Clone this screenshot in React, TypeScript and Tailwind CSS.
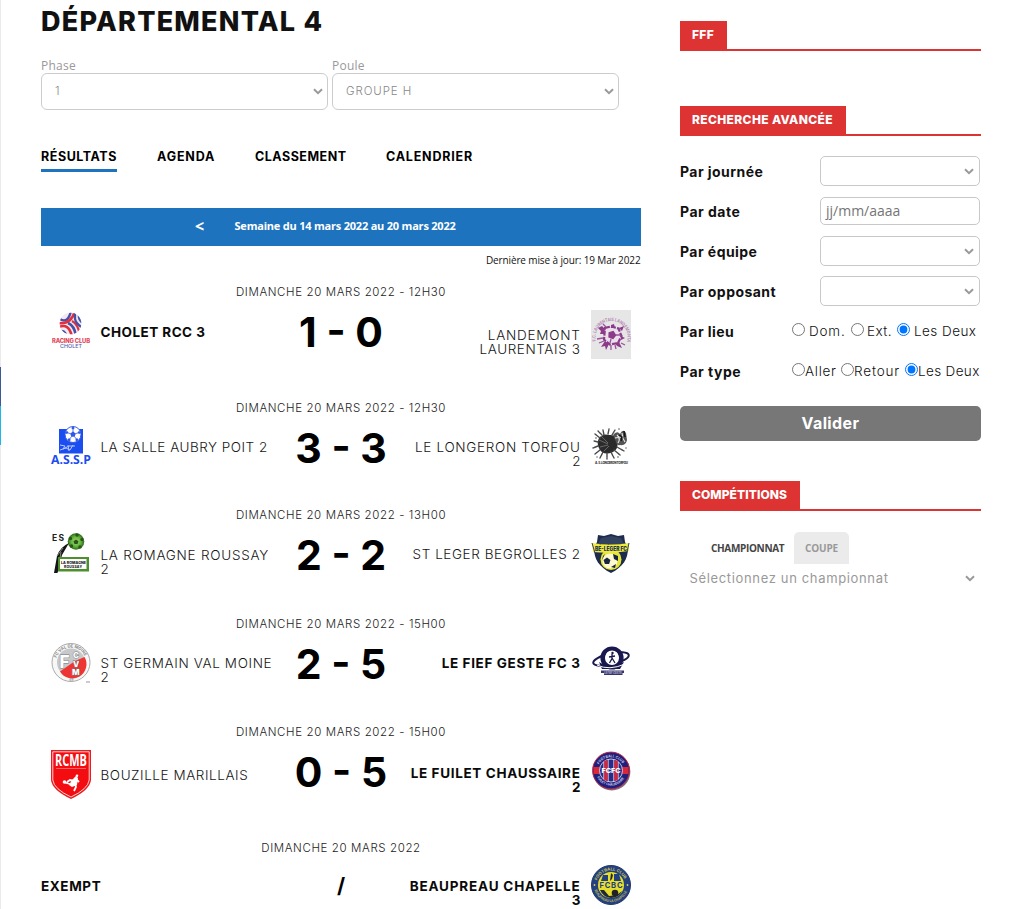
import type { ReactNode } from "react";

const sans = "font-['Inter',sans-serif]";
const open = "font-['Open_Sans',sans-serif]";

function Chevron() {
  return (
    <svg width="10" height="7" viewBox="0 0 10 7" className="shrink-0">
      <path d="M1 1.2 5 5.1 9 1.2" fill="none" stroke="#999" strokeWidth="2" />
    </svg>
  );
}

function ArcText({ id, d, size, fill, length, children }: { id: string; d: string; size: number; fill: string; length: number; children: string }) {
  return (
    <>
      <path id={id} d={d} fill="none" />
      <text fontSize={size} fill={fill} fontWeight="700" fontFamily="Inter, sans-serif">
        <textPath href={`#${id}`} textLength={length} lengthAdjust="spacingAndGlyphs">{children}</textPath>
      </text>
    </>
  );
}

const pentagon = (cx: number, cy: number, r: number, turn = 0) =>
  [0, 1, 2, 3, 4]
    .map((i) => {
      const a = ((i * 72 - 90 + turn) * Math.PI) / 180;
      return `${cx + r * Math.cos(a)},${cy + r * Math.sin(a)}`;
    })
    .join(" ");

function Ball({ cx, cy, r, base, ink }: { cx: number; cy: number; r: number; base: string; ink: string }) {
  return (
    <g>
      <circle cx={cx} cy={cy} r={r} fill={base} stroke={ink} strokeWidth={r * 0.12} />
      <polygon points={pentagon(cx, cy, r * 0.36)} fill={ink} />
      {[0, 1, 2, 3, 4].map((i) => {
        const a = ((i * 72 - 90) * Math.PI) / 180;
        const x = Math.cos(a);
        const y = Math.sin(a);
        return (
          <g key={i}>
            <path d={`M${cx + x * r * 0.3} ${cy + y * r * 0.3}L${cx + x * r * 0.75} ${cy + y * r * 0.75}`} stroke={ink} strokeWidth={r * 0.1} />
            <polygon points={pentagon(cx + x * r * 0.82, cy + y * r * 0.82, r * 0.2, 180 + i * 72)} fill={ink} />
          </g>
        );
      })}
    </g>
  );
}

function Cholet() {
  return (
    <svg width="40" height="40" viewBox="0 0 40 40" className="overflow-visible">
      <clipPath id="cholet"><circle cx="19.5" cy="13.5" r="10.8" /></clipPath>
      <g clipPath="url(#cholet)" fill="none">
        <rect x="8" y="2" width="24" height="24" fill="#f3e9f1" />
        <path d="M9 9Q17 14 20 1" stroke="#4550a8" strokeWidth="2.4" />
        <path d="M7 13Q20 15 24 1" stroke="#e0303f" strokeWidth="2.6" />
        <path d="M7 17.5Q18 12 21 27" stroke="#e0303f" strokeWidth="2.6" />
        <path d="M7 22Q14 18 16 28" stroke="#4550a8" strokeWidth="2.4" />
        <path d="M17 13Q24 16 25 27" stroke="#4550a8" strokeWidth="2.6" />
        <path d="M21 11Q27 14 29 25" stroke="#e0303f" strokeWidth="2.4" />
        <path d="M24 3V9Q25 14 32 18M28 4Q27 10 32 13" stroke="#4550a8" strokeWidth="2.3" />
      </g>
      <text x="1" y="32.5" fontSize="5.8" fontWeight="800" fill="#e2475a" textLength="38" fontFamily="Inter, sans-serif">RACING CLUB</text>
      <text x="9" y="38.4" fontSize="5.4" fontWeight="500" fill="#5560ac" textLength="22" fontFamily="Inter, sans-serif">CHOLET</text>
    </svg>
  );
}

function Landemont() {
  return (
    <svg width="40" height="49" viewBox="0 0 40 49" className="overflow-visible">
      <rect width="40" height="49" fill="#e6e6e6" />
      <ArcText id="landemont" d="M5 31A16 16 0 1 1 36 31" size={4.6} fill="#b589b3" length={62}>F.C. LAURENTAIS LANDEMONTAIS</ArcText>
      <path d="M14 18 20 16.5 27.5 18.5 30.5 26 27 33 19 34.5 13 29.5Z" fill="#eadfea" stroke="#8c3a8a" strokeWidth="2.2" strokeDasharray="5 1.2" />
      <polygon points={pentagon(21, 25, 4.4, 20)} fill="#8c3a8a" />
      <path d="M7 18 11 16 14 19 13 24 9 24 10 21Z" fill="#8c3a8a" />
      <path d="M20 15 23 14 24 18 20 18ZM28 18 33 16 31 21ZM30 26 34 28 30 30ZM24 33 28 32 31 38 26 36ZM14 31 18 34 15 40 14 36 10 37Z" fill="#8c3a8a" />
      <path d="M6 29 12 28M8 33 13 31M20 35V40M24 35 25 39M12 14 15 17M30 33 34 35M20 29 19 33M25 25H29" stroke="#9c529a" strokeWidth="1.3" />
    </svg>
  );
}

function Assp() {
  return (
    <svg width="40" height="40" viewBox="0 0 40 40" className="overflow-visible">
      <rect x="8" y="3" width="24" height="24.5" fill="#1c4df0" />
      <Ball cx={22} cy={8.5} r={8} base="#fff" ink="#3158e8" />
      <path d="M9 19 14 20 12 23 18 20 24 20M9 24 15 22 19 24 22 19M17 19 18 25" stroke="#b9c8ff" strokeWidth="1" fill="none" />
      <text x="0" y="37.5" fontSize="12.5" fontWeight="700" fill="#1c4df0" textLength="40" lengthAdjust="spacingAndGlyphs" fontFamily="Open Sans, sans-serif">A.S.S.P</text>
    </svg>
  );
}

function Torfou() {
  return (
    <svg width="40" height="40" viewBox="0 0 40 40" className="overflow-visible">
      <path d="M8 12Q12 7 18 9Q25 8 26 15Q28 23 22 26Q13 30 9 24Q5 18 8 12Z" fill="#2b2b2b" />
      <path d="M9 12 4 8M11 9 7 5M13 9 12 4M17 8 18 3M21 9 24 4M7 16 3 15M7 20 2 22M9 24 4 28M12 26 9 32M16 27 16 33M20 26 23 32M23 24 29 29M26 21 33 25" stroke="#4a4a4a" strokeWidth="1.4" strokeLinecap="round" strokeDasharray="4 .8 2 1" />
      <path d="M10 10 17 17M8 14 17 18M9 21 17 19M13 25 18 20" stroke="#777" strokeWidth=".8" />
      <path d="M22 9Q26 4 29 8Q32 2 35 7L36 14Q35 20 29 19Q26 20 25 16Z" fill="#555" />
      <path d="M26 9Q30 13 27 17M31 7Q31 12 34 16M24 12 30 11" stroke="#eee" strokeWidth="1.1" fill="none" />
      <path d="M28 9 31 11 30 15M33 5 34 11" stroke="#151515" strokeWidth="1.5" fill="none" />
      <g fill="#555"><circle cx="5" cy="12" r=".8" /><circle cx="28" cy="3" r=".8" /><circle cx="27" cy="31" r=".8" /><circle cx="6" cy="31" r=".7" /><circle cx="35" cy="22" r=".7" /></g>
      <text x="4" y="38" fontSize="3" fontWeight="800" fill="#333" textLength="33" fontFamily="Inter, sans-serif">A. S. LONGERON TORFOU</text>
    </svg>
  );
}

function Romagne() {
  return (
    <svg width="40" height="42" viewBox="0 0 40 42" className="overflow-visible">
      <defs>
        <radialGradient id="green"><stop offset="0" stopColor="#a8df78" /><stop offset=".6" stopColor="#62b13a" /><stop offset="1" stopColor="#2f6b1d" /></radialGradient>
      </defs>
      <text x="1" y="8" fontSize="8.5" fontWeight="700" fill="#222" textLength="12" fontFamily="Inter, sans-serif">ES</text>
      <circle cx="25" cy="8.5" r="8.3" fill="url(#green)" />
      <g fill="#27551b">
        <polygon points={pentagon(25, 9, 2.6)} />
        <circle cx="19.5" cy="5.5" r="1.7" /><circle cx="26" cy="2" r="1.7" /><circle cx="31" cy="6.5" r="1.7" /><circle cx="29" cy="14" r="1.7" /><circle cx="20.5" cy="13" r="1.7" />
      </g>
      <path d="M18 10Q9 14 6 23L3 40H6.5L9 30 11 22Z" fill="#141414" />
      <path d="M6 23 12 15M10 19 8 31" stroke="#888" strokeWidth="1" fill="none" />
      <rect x="7" y="24" width="31" height="14.5" fill="#4c8f2c" />
      <rect x="9" y="26" width="26.5" height="10" fill="#fff" />
      <text x="10" y="30.8" fontSize="3.6" fontWeight="800" fill="#111" textLength="25" fontFamily="Inter, sans-serif">LA ROMAGNE</text>
      <text x="13" y="35" fontSize="3.4" fontWeight="800" fill="#111" textLength="18" fontFamily="Inter, sans-serif">ROUSSAY</text>
    </svg>
  );
}

function Leger() {
  return (
    <svg width="40" height="42" viewBox="0 0 40 42" className="overflow-visible">
      <path d="M7 2 13 3 20 1 27 3 33 2 34 9 37 15C37 26 32 34 20 40C8 34 3 26 3 15L6 9Z" fill="#1d2c4c" />
      <path d="M10 5 20 3 30 5 33 11H7Z" fill="#33425f" />
      <circle cx="20" cy="26.5" r="10.5" fill="#e6e63a" />
      <circle cx="19" cy="28" r="7.5" fill="#fff9cf" />
      <polygon points={pentagon(16, 28, 3.6)} fill="#182540" />
      <path d="M22 21 27 23 27 28 23 26ZM20 34 25 31 24 35ZM12 23 14 21 11 27Z" fill="#182540" />
      <path d="M1 10Q20 13 38 10V18Q20 21 2 19Z" fill="#f0eb39" />
      <path d="M1 10 4 20M38 10 36 19" stroke="#304060" />
      <text x="4" y="17.6" fontSize="5.6" fontWeight="900" fill="#26365a" textLength="32" lengthAdjust="spacingAndGlyphs" fontFamily="Inter, sans-serif">BÉ-LÉGER FC</text>
    </svg>
  );
}

function Germain() {
  return (
    <svg width="40" height="41" viewBox="0 0 40 41" className="overflow-visible">
      <circle cx="20" cy="20.5" r="19" fill="#f7f7f7" stroke="#aaa" />
      <circle cx="20" cy="20.5" r="14" fill="#c6c8ca" />
      <path d="M33.5 15A14 14 0 0 1 9 29.5L24 19Z" fill="#ed3634" />
      <ArcText id="germain" d="M5.5 16A15.3 15.3 0 0 1 34.5 16" size={4.2} fill="#888" length={36}>FC VAL DE MOINE</ArcText>
      <g fontFamily="Inter, sans-serif" fontWeight="800" fill="#fff" stroke="#777" strokeWidth=".8" paintOrder="stroke">
        <text x="8.5" y="26" fontSize="17">F</text>
        <text x="22" y="15.5" fontSize="8">C</text>
        <text x="22" y="24.5" fontSize="8">V</text>
        <text x="21" y="33.3" fontSize="8">M</text>
      </g>
      <text x="18" y="38.8" fontSize="3.6" fill="#777" fontFamily="Inter, sans-serif">49</text>
      <path d="M35 40H39" stroke="#999" />
    </svg>
  );
}

function Fief() {
  return (
    <svg width="40" height="40" viewBox="0 0 40 40" className="overflow-visible">
      <ellipse cx="20" cy="17" rx="18.2" ry="5.6" transform="rotate(-13 20 17)" fill="none" stroke="#19194f" strokeWidth="2" />
      <circle cx="21" cy="16" r="9.3" fill="#fff" stroke="#19194f" strokeWidth="4.6" />
      <path d="M8 20Q18 27 33 20L29 27H11Z" fill="#19194f" />
      <circle cx="21" cy="15" r="6.6" fill="#fff" />
      <circle cx="21.5" cy="11" r="1.2" fill="#19194f" />
      <path d="M21 12V16.5L18.5 21M21 16 24 21M18 15 24 14" stroke="#19194f" strokeWidth="1.3" fill="none" />
      <path d="M6 23Q18 29 34 22" stroke="#fff" strokeWidth="1" fill="none" />
      <path d="M10 28.5H33V31H31.5V33H13V31H10Z" fill="#35356b" />
      <text x="13" y="32" fontSize="3.2" fontWeight="700" fill="#a5a5c8" textLength="18" fontFamily="Inter, sans-serif">LE FIEF GESTE</text>
    </svg>
  );
}

function Rcmb() {
  return (
    <svg width="40" height="49" viewBox="0 0 40 49" className="overflow-visible">
      <path d="M0 0H40V30Q39 40 20 49Q1 40 0 30Z" fill="#e81d1f" />
      <path d="M1.8 1.8H38.2V30Q37 39 20 47Q3 39 1.8 30Z" fill="#f40d10" stroke="#fff" strokeWidth=".8" />
      <text x="4" y="16" fontSize="15.5" fontWeight="700" fill="#fff" textLength="32" lengthAdjust="spacingAndGlyphs" fontFamily="Open Sans, sans-serif">RCMB</text>
      <path d="M5 18.5H35" stroke="#ff6c6c" strokeWidth=".9" />
      <path d="M25 27 23.5 32 25 37 23 41M23.5 31 19 30 16 32M22 35 14 32.5M25 29 28 32" stroke="#fff" strokeWidth="1.8" fill="none" />
      <path d="M21 30 25 26 27 28 26 35 21 37 18 35Z" fill="#fff" />
      <circle cx="26" cy="25.8" r="1.3" fill="#fff" />
      <circle cx="13.5" cy="32" r="1.8" fill="#fff" />
    </svg>
  );
}

function Fuilet() {
  return (
    <svg width="40" height="41" viewBox="0 0 40 41" className="overflow-visible">
      <circle cx="20.8" cy="21.8" r="18.6" fill="#77777f" />
      <circle cx="20" cy="20.5" r="18.4" fill="#20207c" stroke="#bd2444" />
      <path d="M2.5 17H37.5V24H2.5Z" fill="#d9283a" />
      <circle cx="20" cy="20.5" r="11.5" fill="#2a2a8c" stroke="#e8e8f4" strokeWidth=".8" />
      <path d="M15 10.5V30.5M25 10.5V30.5" stroke="#d92436" strokeWidth="3.4" />
      <path d="M12.7 12V29M17.3 9.5V31.5M22.7 9.5V31.5M27.3 12V29" stroke="#eee" strokeWidth=".7" />
      <text x="10.5" y="23" fontSize="6.8" fontWeight="800" fill="#fff" textLength="19" lengthAdjust="spacingAndGlyphs" fontFamily="Inter, sans-serif">FCFC</text>
      <ArcText id="fuilet-a" d="M8 14.5A13.6 13.6 0 0 1 32 14.5" size={3.6} fill="#c9c9ea" length={28}>FOOTBALL CLUB</ArcText>
      <ArcText id="fuilet-b" d="M6 27A15.6 15.6 0 0 0 34 27" size={3.4} fill="#c9c9ea" length={33}>FUILET CHAUSSAIRE</ArcText>
    </svg>
  );
}

function Beaupreau() {
  return (
    <svg width="40" height="40" viewBox="0 0 40 40" className="overflow-visible">
      <circle cx="20" cy="19" r="19.5" fill="#24407f" stroke="#20386c" />
      <circle cx="20" cy="19" r="13" fill="#e5de2e" />
      <path d="M12 9H17V15H10ZM23 8H28L30 15H23Z" fill="#24407f" />
      <path d="M20 7 22 9 21 13 19 15Z" fill="#202838" />
      <path d="M9 24 13 24 18 30 26 29 31 25Q28 32 20 32Q12 31 9 24Z" fill="#202838" />
      <circle cx="24" cy="27" r="3.3" fill="#222" />
      <text x="8.5" y="21.8" fontSize="7.6" fontWeight="700" fill="#24407f" textLength="23" fontFamily="Inter, sans-serif">FCBC</text>
      <ArcText id="beau-a" d="M6 14.5A14.8 14.8 0 0 1 34 14.5" size={4} fill="#c9c554" length={35}>FOOTBALL CLUB</ArcText>
      <ArcText id="beau-b" d="M3.5 24A17.3 17.3 0 0 0 36.5 24" size={3.6} fill="#b9b85c" length={42}>BEAUPREAU LA CHAPELLE</ArcText>
      <circle cx="3.5" cy="19" r=".9" fill="#d7d24a" /><circle cx="36.5" cy="19" r=".9" fill="#d7d24a" />
    </svg>
  );
}

type Line = { text: string; track: string };
type Match = {
  height: string;
  date: Line;
  home: { lines: Line[]; bold?: boolean; top: string; logo?: ReactNode };
  away: { lines: Line[]; bold?: boolean; top: string; logo: ReactNode };
  score: string;
  exempt?: boolean;
};

const dateTrack = "tracking-[0.61px]";

const matches: Match[] = [
  {
    height: "h-[116px]",
    date: { text: "DIMANCHE 20 MARS 2022 - 12H30", track: dateTrack },
    home: { lines: [{ text: "CHOLET RCC 3", track: "tracking-[0.47px]" }], bold: true, top: "mt-[25px]", logo: <Cholet /> },
    away: { lines: [{ text: "LANDEMONT", track: "tracking-[0.75px]" }, { text: "LAURENTAIS 3", track: "tracking-[0.6px]" }], top: "mt-[28px]", logo: <Landemont /> },
    score: "1 - 0",
  },
  {
    height: "h-[107px]",
    date: { text: "DIMANCHE 20 MARS 2022 - 12H30", track: dateTrack },
    home: { lines: [{ text: "LA SALLE AUBRY POIT 2", track: "tracking-[0.5px]" }], top: "mt-[24px]", logo: <Assp /> },
    away: { lines: [{ text: "LE LONGERON TORFOU", track: "tracking-[0.68px]" }, { text: "2", track: "" }], top: "mt-[24px]", logo: <Torfou /> },
    score: "3 - 3",
  },
  {
    height: "h-[109px]",
    date: { text: "DIMANCHE 20 MARS 2022 - 13H00", track: dateTrack },
    home: { lines: [{ text: "LA ROMAGNE ROUSSAY", track: "tracking-[0.74px]" }, { text: "2", track: "" }], top: "mt-[25px]", logo: <Romagne /> },
    away: { lines: [{ text: "ST LEGER BEGROLLES 2", track: "tracking-[0.57px]" }], top: "mt-[24px]", logo: <Leger /> },
    score: "2 - 2",
  },
  {
    height: "h-[108px]",
    date: { text: "DIMANCHE 20 MARS 2022 - 15H00", track: dateTrack },
    home: { lines: [{ text: "ST GERMAIN VAL MOINE", track: "tracking-[0.62px]" }, { text: "2", track: "" }], top: "mt-[24px]", logo: <Germain /> },
    away: { lines: [{ text: "LE FIEF GESTE FC 3", track: "tracking-[0.63px]" }], bold: true, top: "mt-[24px]", logo: <Fief /> },
    score: "2 - 5",
  },
  {
    height: "h-[116px]",
    date: { text: "DIMANCHE 20 MARS 2022 - 15H00", track: dateTrack },
    home: { lines: [{ text: "BOUZILLE MARILLAIS", track: "tracking-[0.56px]" }], top: "mt-[28px]", logo: <Rcmb /> },
    away: { lines: [{ text: "LE FUILET CHAUSSAIRE", track: "tracking-[0.65px]" }, { text: "2", track: "" }], bold: true, top: "mt-[26px]", logo: <Fuilet /> },
    score: "0 - 5",
  },
  {
    height: "h-[69px]",
    date: { text: "DIMANCHE 20 MARS 2022", track: dateTrack },
    home: { lines: [{ text: "EXEMPT", track: "tracking-[0.6px]" }], bold: true, top: "mt-[23px]" },
    away: { lines: [{ text: "BEAUPREAU CHAPELLE", track: "tracking-[0.82px]" }, { text: "3", track: "" }], bold: true, top: "mt-[23px]", logo: <Beaupreau /> },
    score: "/",
    exempt: true,
  },
];

function Names({ lines, bold, top, right }: { lines: Line[]; bold?: boolean; top: string; right?: boolean }) {
  return (
    <div className={`flex flex-col text-[13.5px] leading-[14px] whitespace-nowrap ${top} ${right ? "items-end" : "items-start"} ${bold ? "font-bold text-[#0a0a0a]" : "font-light text-[#151515]"}`}>
      {lines.map((l) => (
        <span key={l.text} className={l.track}>{l.text}</span>
      ))}
    </div>
  );
}

function MatchRow({ match: m }: { match: Match }) {
  return (
    <article className={`${m.height} ${sans}`}>
      <p className={`h-4 text-center text-[11.5px] leading-4 font-light text-[#222] ${m.date.track}`}>{m.date.text}</p>
      <div className="grid grid-cols-[240px_120px_180px_60px]">
        <div className="flex items-start">
          {m.home.logo && <div className="mt-2.5 mr-[9.5px] ml-2.5 w-10 shrink-0">{m.home.logo}</div>}
          <Names {...m.home} />
        </div>
        <div className={`flex justify-center whitespace-pre font-bold text-black ${m.exempt ? "pt-5 text-[21px] leading-5" : "pt-2.5 text-[41px] leading-[44px]"}`}>{m.score}</div>
        <div className="flex items-start justify-end pr-[0.5px]"><Names {...m.away} right /></div>
        <div className="mt-2.5 ml-2.5 w-10">{m.away.logo}</div>
      </div>
    </article>
  );
}

function Heading({ children, width, track }: { children: string; width: string; track: string }) {
  return (
    <h2 className={`flex h-[30px] border-b-2 border-[#dd3333] text-[12px] font-extrabold text-white ${sans}`}>
      <span className={`h-[28px] bg-[#dd3333] pl-3 leading-[27px] whitespace-nowrap ${width} ${track}`}>{children}</span>
    </h2>
  );
}

function Label({ children, track }: { children: string; track: string }) {
  return <span className={`w-[112px] shrink-0 text-[14px] font-bold whitespace-nowrap text-[#111] ${sans} ${track}`}>{children}</span>;
}

function Field({ label, track, children }: { label: string; track: string; children?: ReactNode }) {
  return (
    <div className="flex h-10 items-center">
      <Label track={track}>{label}</Label>
      <div className={`ml-7 flex w-[160px] items-center rounded-[5px] border border-[#c8c8c8] px-[5px] ${children ? "h-[28px] pb-0.5" : "h-[30px] justify-end"}`}>
        {children ?? <Chevron />}
      </div>
    </div>
  );
}

function Option({ name, label, width, gap, track, checked }: { name: string; label: string; width: string; gap: string; track: string; checked?: boolean }) {
  return (
    <label className={`flex items-center whitespace-nowrap ${gap} ${width}`}>
      <input type="radio" name={name} defaultChecked={checked} className="m-0 mb-1 size-[13px] shrink-0" />
      <span className={track}>{label}</span>
    </label>
  );
}

function TopSelect({ label, value }: { label: string; value: string }) {
  return (
    <label className="flex w-[287px] flex-col">
      <span className={`h-4 pt-px text-[12px] leading-4 tracking-[0.25px] text-[#999] ${open}`}>{label}</span>
      <span className={`flex h-[37px] items-center justify-between rounded-[6px] border border-[#ccc] pr-1 pl-[13px] text-[11.5px] font-light tracking-[0.9px] text-[#888] ${sans}`}>
        {value}
        <Chevron />
      </span>
    </label>
  );
}

export default function App() {
  return (
    <div className="flex h-[909px] w-[1021px] overflow-hidden bg-white">
      <div className="flex w-px shrink-0 flex-col bg-[#ebebeb] pt-[367px]">
        <i className="h-[39px] bg-[#3b5998]" />
        <i className="h-[39px] bg-[#1cb7eb]" />
      </div>

      <main className="ml-10 w-[600px] shrink-0">
        <h1 className={`h-[57px] pt-[6px] text-[27px] leading-8 font-extrabold tracking-[1.25px] whitespace-nowrap text-[#111] ${sans}`}>DÉPARTEMENTAL 4</h1>
        <div className="flex gap-1">
          <TopSelect label="Phase" value="1" />
          <TopSelect label="Poule" value="GROUPE H" />
        </div>
        <nav className={`mt-[38px] flex h-[24px] text-[12.5px] leading-[18px] font-bold whitespace-nowrap text-black ${sans}`}>
          <a className="mr-10 w-[76px] border-b-3 border-[#1e73be] tracking-[0.55px]">RÉSULTATS</a>
          <a className="mr-10 w-[58px] tracking-[0.85px]">AGENDA</a>
          <a className="mr-10 w-[91px] tracking-[0.5px]">CLASSEMENT</a>
          <a className="tracking-[0.8px]">CALENDRIER</a>
        </nav>
        <div className={`mt-9 flex h-[38px] bg-[#1e73be] pl-[154px] text-[11px] leading-9 font-bold whitespace-nowrap text-white ${open}`}>
          <span className="w-[39.5px] text-[16px]">&lt;</span>
          <span className="tracking-[-0.21px]">Semaine du 14 mars 2022 au 20 mars 2022</span>
        </div>
        <p className={`h-[38px] pt-1.5 pr-[0.5px] text-right text-[10px] leading-4 tracking-[-0.12px] text-[#111] ${open}`}>Dernière mise à jour: 19 Mar 2022</p>
        {matches.map((m, i) => (
          <MatchRow key={i} match={m} />
        ))}
      </main>

      <aside className="ml-[39px] w-[301px] shrink-0 pt-[21px]">
        <Heading width="w-[47px]" track="tracking-[0.3px]">FFF</Heading>
        <div className="mt-[55px]">
          <Heading width="w-[166px]" track="tracking-[0.36px]">RECHERCHE AVANCÉE</Heading>
        </div>
        <form className="mt-[15px]">
          <Field label="Par journée" track="tracking-[0.45px]" />
          <Field label="Par date" track="tracking-[0.5px]">
            <span className={`text-[14px] text-[#757575] ${open}`}>jj/mm/aaaa</span>
          </Field>
          <Field label="Par équipe" track="tracking-[0.45px]" />
          <Field label="Par opposant" track="tracking-[0.45px]" />
          <div className={`flex h-10 items-center text-[13.5px] font-light text-[#111] ${sans}`}>
            <Label track="tracking-[0.45px]">Par lieu</Label>
            <Option name="lieu" label="Dom." width="w-[59px]" gap="gap-1" track="tracking-[0.8px]" />
            <Option name="lieu" label="Ext." width="w-[46px]" gap="gap-[3px]" track="tracking-[0.4px]" />
            <Option name="lieu" label="Les Deux" width="w-[80px]" gap="gap-1" track="tracking-[0.45px]" checked />
          </div>
          <div className={`flex h-10 items-center text-[13.5px] font-light text-[#111] ${sans}`}>
            <Label track="tracking-[0.5px]">Par type</Label>
            <Option name="type" label="Aller" width="w-[49px]" gap="gap-0" track="tracking-[0.7px]" />
            <Option name="type" label="Retour" width="w-[64px]" gap="gap-0" track="tracking-[0.85px]" />
            <Option name="type" label="Les Deux" width="w-[76px]" gap="gap-0" track="tracking-[0.35px]" checked />
          </div>
          <button type="button" className={`mt-[15px] block h-[35px] w-full rounded-[5px] bg-[#777] text-[16px] leading-[35px] font-bold tracking-[0.4px] text-white ${sans}`}>Valider</button>
        </form>
        <div className="mt-10">
          <Heading width="w-[120px]" track="tracking-[0.07px]">COMPÉTITIONS</Heading>
        </div>
        <div className={`mt-[21px] flex h-8 pl-[31px] text-[10px] leading-8 font-bold ${open}`}>
          <span className="w-[83px] tracking-[-0.33px] text-[#444]">CHAMPIONNAT</span>
          <span className="w-[55px] rounded-t-[5px] bg-[#ebebeb] text-center tracking-[-0.2px] text-[#999]">COUPE</span>
        </div>
        <div className={`flex h-[29px] items-center justify-between pr-1.5 pl-[9.5px] text-[13px] text-[#999] ${sans}`}>
          <span className="tracking-[0.65px]">Sélectionnez un championnat</span>
          <Chevron />
        </div>
      </aside>
    </div>
  );
}
